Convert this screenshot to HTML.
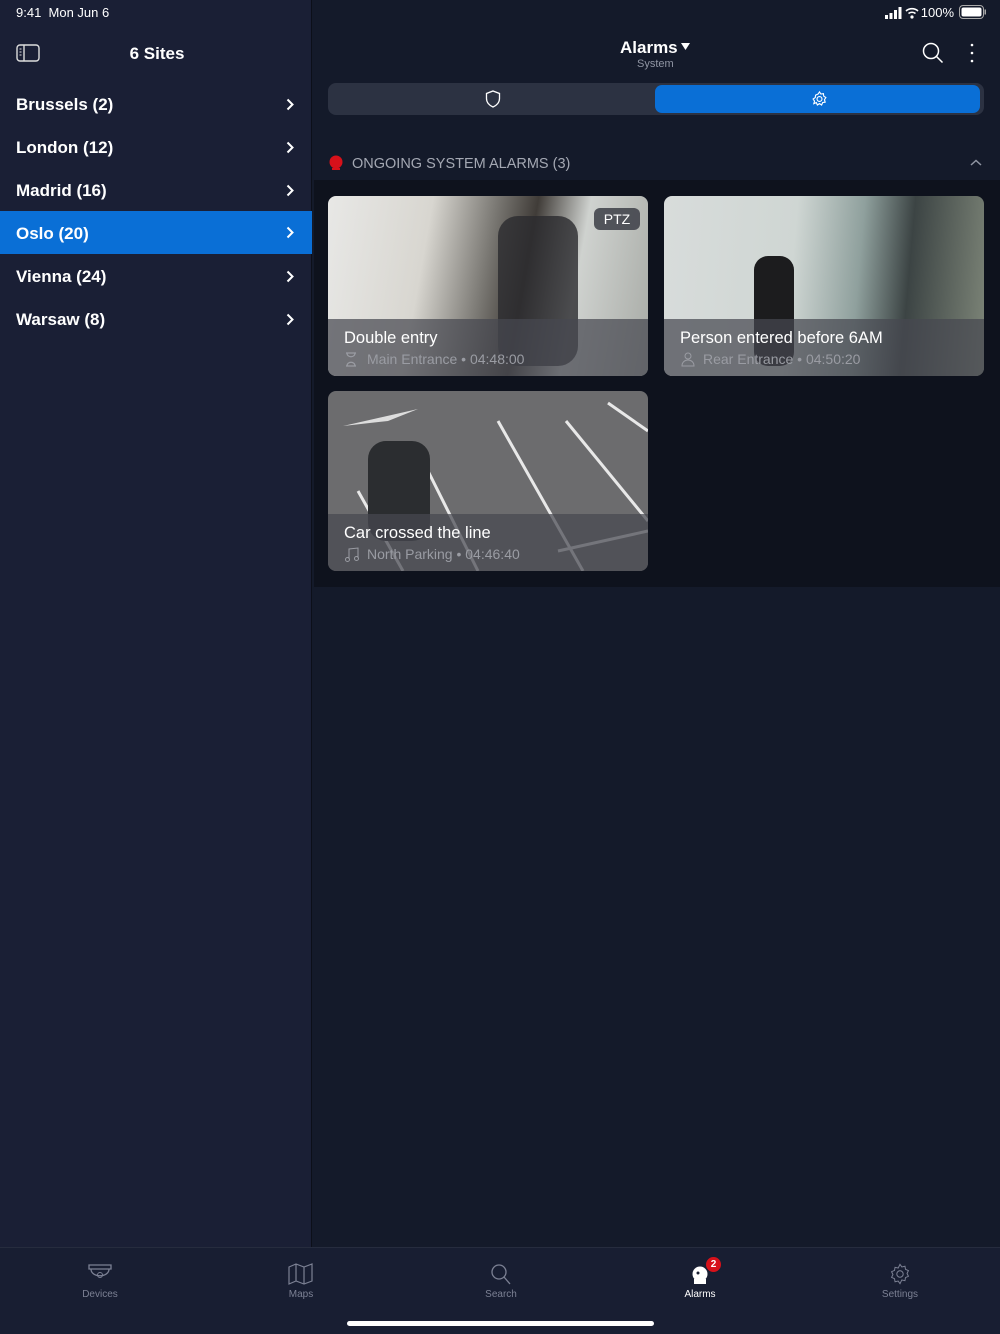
<!DOCTYPE html>
<html><head><meta charset="utf-8"><style>
*{margin:0;padding:0;box-sizing:border-box}
body{width:1000px;height:1334px;background:#141a2a;font-family:"Liberation Sans",sans-serif;color:#fff;position:relative;overflow:hidden}
.side{position:absolute;left:0;top:0;width:312px;height:1248px;background:#1a1f35;border-right:1px solid #0c0f19}
.status{position:absolute;top:5px;font-size:13px}
.row{position:absolute;left:0;width:312px;height:43px;font-size:17px;font-weight:bold;padding:12px 16px}
.row svg{position:absolute;right:18px;top:15px}
.sel{background:#0a6fd6}
.card{position:absolute;width:320px;height:180px;border-radius:8px;overflow:hidden}
.ov{position:absolute;left:0;right:0;bottom:0;height:57px;background:rgba(70,72,80,.72)}
.t{position:absolute;left:16px;top:133px;font-size:16.5px}
.s{position:absolute;left:39px;top:155px;font-size:14px;color:#9a9ca3}
.tab{position:absolute;top:1263px;width:100px;text-align:center;font-size:10px;color:#7c8194}
.tab svg{display:block;margin:0 auto 4px}
</style></head><body>
<div class="side">
 <div class="status" style="left:16px">9:41&nbsp; Mon Jun 6</div>
 <svg style="position:absolute;left:16px;top:44px" width="24" height="18" viewBox="0 0 24 18"><rect x="1" y="1" width="22" height="16" rx="3" fill="none" stroke="#ddd" stroke-width="1.4"/><line x1="8" y1="1" x2="8" y2="17" stroke="#ddd" stroke-width="1.4"/><line x1="3.5" y1="5" x2="5.5" y2="5" stroke="#ddd"/><line x1="3.5" y1="8" x2="5.5" y2="8" stroke="#ddd"/><line x1="3.5" y1="11" x2="5.5" y2="11" stroke="#ddd"/></svg>
 <div style="position:absolute;left:0;width:312px;top:44px;text-align:center;font-size:17px;font-weight:bold;padding-left:2px">6 Sites</div>
 <div class="row" style="top:83px">Brussels (2)<svg width="8" height="13"><path d="M1.5 1.5l5 5-5 5" stroke="#fff" stroke-width="2" fill="none"/></svg></div>
 <div class="row" style="top:126px">London (12)<svg width="8" height="13"><path d="M1.5 1.5l5 5-5 5" stroke="#fff" stroke-width="2" fill="none"/></svg></div>
 <div class="row" style="top:169px">Madrid (16)<svg width="8" height="13"><path d="M1.5 1.5l5 5-5 5" stroke="#fff" stroke-width="2" fill="none"/></svg></div>
 <div class="row sel" style="top:211px;padding-top:13px">Oslo (20)<svg width="8" height="13"><path d="M1.5 1.5l5 5-5 5" stroke="#fff" stroke-width="2" fill="none"/></svg></div>
 <div class="row" style="top:255px">Vienna (24)<svg width="8" height="13"><path d="M1.5 1.5l5 5-5 5" stroke="#fff" stroke-width="2" fill="none"/></svg></div>
 <div class="row" style="top:298px">Warsaw (8)<svg width="8" height="13"><path d="M1.5 1.5l5 5-5 5" stroke="#fff" stroke-width="2" fill="none"/></svg></div>
</div>
<div class="status" style="right:46px;font-size:13px">100%</div>
<svg style="position:absolute;left:884px;top:7px" width="72" height="12"><rect x="1" y="8" width="3" height="4" fill="#fff"/><rect x="5.5" y="6" width="3" height="6" fill="#fff"/><rect x="10" y="3" width="3" height="9" fill="#fff"/><rect x="14.5" y="0" width="3" height="12" fill="#fff"/><path d="M22 4a9 9 0 0 1 12 0M24.5 6.5a5.5 5.5 0 0 1 7 0" stroke="#fff" stroke-width="1.6" fill="none"/><circle cx="28" cy="10" r="1.6" fill="#fff"/></svg>
<svg style="position:absolute;left:959px;top:5px" width="28" height="14"><rect x="0.5" y="0.5" width="24" height="13" rx="3.5" fill="none" stroke="#aaa"/><rect x="2.5" y="2.5" width="20" height="9" rx="2" fill="#fff"/><rect x="25.5" y="4.5" width="1.5" height="5" fill="#aaa"/></svg>
<div style="position:absolute;left:620px;top:38px;font-size:17px;font-weight:bold">Alarms</div>
<svg style="position:absolute;left:681px;top:43px" width="9" height="7"><path d="M0 0h9L4.5 7z" fill="#fff"/></svg>
<div style="position:absolute;left:637px;top:58px;font-size:11px;color:#9095a3">System</div>
<svg style="position:absolute;left:922px;top:42px" width="22" height="22"><circle cx="9" cy="9" r="7.5" stroke="#fff" stroke-width="1.5" fill="none"/><path d="M14.5 14.5l6 6" stroke="#fff" stroke-width="1.5"/></svg>
<svg style="position:absolute;left:970px;top:43px" width="4" height="20"><circle cx="2" cy="2" r="1.3" fill="#fff"/><circle cx="2" cy="10" r="1.3" fill="#fff"/><circle cx="2" cy="18" r="1.3" fill="#fff"/></svg>
<div style="position:absolute;left:328px;top:83px;width:656px;height:32px;border-radius:8px;background:#2c3242"></div>
<div style="position:absolute;left:655px;top:85px;width:325px;height:28px;border-radius:7px;background:#0a6fd6"></div>
<svg style="position:absolute;left:485px;top:90px" width="16" height="18"><path d="M8 1l6.5 2.5v5c0 4-3 7-6.5 8.5C4.5 15.5 1.5 12.5 1.5 8.5v-5z" stroke="#fff" stroke-width="1.3" fill="none"/></svg>
<svg style="position:absolute;left:811px;top:90px" width="17" height="18" viewBox="0 0 24 24"><path d="M12 2l2 3 3.5-.5.5 3.5 3 2-2 3 1 3.5-3.5.5-1.5 3.5-3-2-3 2-1.5-3.5L4 18.5l1-3.5-2-3 3-2 .5-3.5L10 5z" stroke="#fff" stroke-width="1.6" fill="none"/><circle cx="12" cy="12" r="3.5" stroke="#fff" stroke-width="1.6" fill="none"/></svg>
<div style="position:absolute;left:314px;top:180px;width:686px;height:407px;background:#0e121d"></div>
<svg style="position:absolute;left:329px;top:155px" width="14" height="16"><circle cx="7" cy="7" r="6.5" fill="#d7111a"/><rect x="3" y="13" width="8" height="2" fill="#d7111a"/></svg>
<div style="position:absolute;left:352px;top:156px;font-size:14.5px;color:#a4a8b3">ONGOING SYSTEM ALARMS (3)</div>
<svg style="position:absolute;left:970px;top:159px" width="12" height="8"><path d="M1 6l5-4.5 5 4.5" stroke="#9095a3" stroke-width="1.5" fill="none"/></svg>

<div class="card" style="left:328px;top:196px;background:linear-gradient(100deg,#e8e8e6 0%,#d8d6d0 30%,#7c7a75 48%,#403c38 60%,#cfd2cf 75%,#a8aba6 100%)">
 <div style="position:absolute;left:170px;top:20px;width:80px;height:150px;background:#2a2a2e;border-radius:20px;opacity:.8"></div>
 <div style="position:absolute;right:8px;top:12px;width:46px;height:22px;border-radius:6px;background:rgba(60,62,70,.85);font-size:14px;text-align:center;line-height:22px">PTZ</div>
 <div class="ov"></div><div class="t">Double entry</div>
 <svg style="position:absolute;left:17px;top:156px" width="12" height="15"><path d="M1 1h10M1 14h10M2 1c0 5 8 5 8 0M2 14c0-5 8-5 8 0" stroke="#9a9ca3" stroke-width="1.2" fill="none"/></svg>
 <div class="s">Main Entrance • 04:48:00</div></div>
<div class="card" style="left:664px;top:196px;background:linear-gradient(95deg,#d8dcdb 0%,#cfd6d3 40%,#8fa09d 60%,#3c4444 75%,#7d8578 100%)">
 <div style="position:absolute;left:90px;top:60px;width:40px;height:110px;background:#1c1c1e;border-radius:14px"></div>
 <div class="ov"></div><div class="t">Person entered before 6AM</div>
 <svg style="position:absolute;left:17px;top:156px" width="14" height="15"><circle cx="7" cy="4" r="3" stroke="#9a9ca3" fill="none"/><path d="M1 14c0-4 3-6 6-6s6 2 6 6z" stroke="#9a9ca3" fill="none"/></svg>
 <div class="s">Rear Entrance • 04:50:20</div></div>
<div class="card" style="left:328px;top:391px;background:#6c6c6e">
 <svg style="position:absolute;left:0;top:0" width="320" height="180"><path d="M30 100L75 180M90 60L150 180M170 30L255 180M238 30L320 130M280 12L320 40M230 160L320 140" stroke="#e8e8e8" stroke-width="3"/><path d="M15 35L90 18L60 30z" fill="#ddd"/><rect x="40" y="50" width="62" height="100" rx="18" fill="#2b2d30"/></svg>
 <div class="ov"></div><div class="t">Car crossed the line</div>
 <svg style="position:absolute;left:17px;top:156px" width="14" height="15"><path d="M4 12V2l9-1v10" stroke="#9a9ca3" fill="none"/><circle cx="2.5" cy="12.5" r="2" stroke="#9a9ca3" fill="none"/><circle cx="11.5" cy="11.5" r="2" stroke="#9a9ca3" fill="none"/></svg>
 <div class="s">North Parking • 04:46:40</div></div>

<div style="position:absolute;left:0;top:1247px;width:1000px;height:87px;background:#181e32;border-top:1px solid #262c3e"></div>
<div class="tab" style="left:50px"><svg width="26" height="22"><path d="M2 2h22v4H2zM4 6c0 9 18 9 18 0" stroke="#7c8194" stroke-width="1.3" fill="none"/><circle cx="13" cy="12" r="2.5" stroke="#7c8194" fill="none"/></svg>Devices</div>
<div class="tab" style="left:251px"><svg width="26" height="22"><path d="M1 4l7-3 8 3 8-3v17l-8 3-8-3-7 3zM8 1v17M16 4v17" stroke="#7c8194" stroke-width="1.2" fill="none"/></svg>Maps</div>
<div class="tab" style="left:451px"><svg width="26" height="22"><circle cx="11" cy="9" r="7" stroke="#7c8194" stroke-width="1.3" fill="none"/><path d="M16 14l6 7" stroke="#7c8194" stroke-width="1.3"/></svg>Search</div>
<div class="tab" style="left:650px;color:#fff"><svg width="26" height="22"><circle cx="13" cy="11" r="7.5" fill="#fff"/><rect x="7" y="16" width="12" height="5" fill="#fff"/><circle cx="11" cy="10" r="1.5" fill="#181e32"/></svg>Alarms</div>
<div style="position:absolute;left:706px;top:1257px;width:15px;height:15px;border-radius:50%;background:#d7111a;font-size:10px;font-weight:bold;text-align:center;line-height:15px">2</div>
<div class="tab" style="left:850px"><svg width="26" height="22" viewBox="0 0 24 24"><path d="M12 1.5l2 2.8 3.4-.8.6 3.4 3.2 1.4-1.5 3.1 1.5 3.1-3.2 1.4-.6 3.4-3.4-.8L12 22.5l-2-2.8-3.4.8-.6-3.4-3.2-1.4 1.5-3.1L2.8 9.5 6 8.1l.6-3.4 3.4.8z" stroke="#7c8194" stroke-width="1.1" fill="none"/><circle cx="12" cy="12" r="3.5" stroke="#7c8194" stroke-width="1.1" fill="none"/></svg>Settings</div>
<div style="position:absolute;left:347px;top:1321px;width:307px;height:5px;border-radius:3px;background:#fff"></div>
</body></html>
